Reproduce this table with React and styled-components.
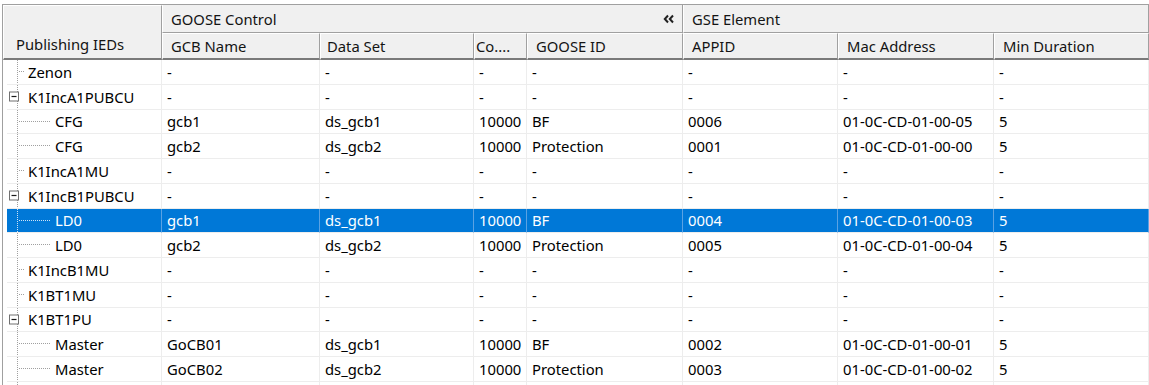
import React from "react";
import styled, { createGlobalStyle } from "styled-components";

const GlobalStyle = createGlobalStyle`
  html, body {
    margin: 0;
    padding: 0;
    background: #ffffff;
    overflow: hidden;
  }
  body {
    font-family: "Noto Sans", "Open Sans", sans-serif;
    font-size: 14.8px;
  }
`;

const COLS = "158px 154px 53px 156px 155px 156px 1fr";
const ROW_H = 24.75;

const Grid = styled.div`
  margin: 4px 0 0 2px;
  border-top: 1px solid #a0a0a0;
  border-left: 1px solid #a0a0a0;
  height: 381px;
  overflow: hidden;
`;

const Header = styled.div`
  display: grid;
  grid-template-columns: 159px ${COLS};
  grid-template-rows: 28px 27px;
  background: #f0f0f0;
  color: #141414;
`;

const HeadCell = styled.div`
  box-sizing: border-box;
  display: flex;
  align-items: ${(p) => (p.$bottom ? "flex-end" : "center")};
  justify-content: space-between;
  padding: 0 8px ${(p) => (p.$bottom ? "4px" : "0")} ${(p) => p.$pad ?? 8}px;
  border-left: 1px solid #ffffff;
  border-right: 1px solid #a0a0a0;
  border-top: ${(p) => (p.$lower ? "1px solid #ffffff" : "none")};
  border-bottom: ${(p) => (p.$lower ? "2px solid #7a7a7a" : "1px solid #a0a0a0")};
  grid-column: ${(p) => p.$col || "auto"};
  grid-row: ${(p) => p.$row || "auto"};
  white-space: nowrap;
  overflow: hidden;
`;

const Collapse = styled.svg`
  flex: none;
  margin-right: 0;
`;

const Row = styled.div`
  display: grid;
  grid-template-columns: 155px ${COLS};
  height: ${ROW_H}px;
  padding-left: 4px;
  color: ${(p) => (p.$selected ? "#ffffff" : "#000000")};
`;

const Cell = styled.div`
  box-sizing: border-box;
  display: flex;
  align-items: center;
  padding-left: 5px;
  border-right: 1px solid ${(p) => (p.$selected ? "#5aa2e3" : "#ededed")};
  border-bottom: 1px solid #ededed;
  background: ${(p) => (p.$selected ? "#0078d7" : "transparent")};
  white-space: nowrap;
  overflow: hidden;
`;

const TreeCell = styled(Cell)`
  padding-left: 0;
`;

const Guide = styled.svg`
  flex: none;
  height: 100%;
`;

const Label = styled.span`
  padding-left: 2px;
`;

const TreeGuide = ({ level, kind, selected }) => {
  const w = level === 0 ? 19 : 46;
  const h = ROW_H;
  const mid = Math.round(h / 2) - 0.5;
  const line = selected ? "#cfe3f6" : "#a0a0a0";
  return (
    <Guide width={w} viewBox={`0 0 ${w} ${h}`} preserveAspectRatio="xMinYMin slice">
      <line x1="10.5" y1="0" x2="10.5" y2={h} stroke={line} strokeDasharray="1 1" />
      {level === 1 && (
        <line x1="12" y1={mid} x2="44" y2={mid} stroke={line} strokeDasharray="1 1" />
      )}
      {level === 0 && kind === "leaf" && (
        <line x1="12" y1={mid} x2="18" y2={mid} stroke={line} strokeDasharray="1 1" />
      )}
      {kind === "open" && (
        <g>
          <rect x="2.5" y={mid - 4.5} width="9" height="9" fill="#ffffff" stroke="#707070" />
          <line x1="4.5" y1={mid} x2="9.5" y2={mid} stroke="#1a1a1a" strokeWidth="1.2" />
        </g>
      )}
    </Guide>
  );
};

const dash = ["-", "-", "-", "-", "-", "-", "-"];

const rows = [
  { level: 0, kind: "leaf", name: "Zenon", cells: dash },
  { level: 0, kind: "open", name: "K1IncA1PUBCU", cells: dash },
  { level: 1, name: "CFG", cells: ["gcb1", "ds_gcb1", "10000", "BF", "0006", "01-0C-CD-01-00-05", "5"] },
  { level: 1, name: "CFG", cells: ["gcb2", "ds_gcb2", "10000", "Protection", "0001", "01-0C-CD-01-00-00", "5"] },
  { level: 0, kind: "leaf", name: "K1IncA1MU", cells: dash },
  { level: 0, kind: "open", name: "K1IncB1PUBCU", cells: dash },
  { level: 1, name: "LD0", selected: true, cells: ["gcb1", "ds_gcb1", "10000", "BF", "0004", "01-0C-CD-01-00-03", "5"] },
  { level: 1, name: "LD0", cells: ["gcb2", "ds_gcb2", "10000", "Protection", "0005", "01-0C-CD-01-00-04", "5"] },
  { level: 0, kind: "leaf", name: "K1IncB1MU", cells: dash },
  { level: 0, kind: "leaf", name: "K1BT1MU", cells: dash },
  { level: 0, kind: "open", name: "K1BT1PU", cells: dash },
  { level: 1, name: "Master", cells: ["GoCB01", "ds_gcb1", "10000", "BF", "0002", "01-0C-CD-01-00-01", "5"] },
  { level: 1, name: "Master", cells: ["GoCB02", "ds_gcb2", "10000", "Protection", "0003", "01-0C-CD-01-00-02", "5"] },
  { level: 1, name: "", cells: ["", "", "", "", "", "", ""] },
];

export default function App() {
  return (
    <>
      <GlobalStyle />
      <Grid>
        <Header>
          <HeadCell $row="1 / 3" $lower $bottom $pad={12}>Publishing IEDs</HeadCell>
          <HeadCell $col="2 / 6">
            GOOSE Control
            <Collapse width="11" height="10" viewBox="0 0 11 10">
              <polyline points="5,1.5 1.8,5 5,8.5" fill="none" stroke="#222" strokeWidth="2" />
              <polyline points="10,1.5 6.8,5 10,8.5" fill="none" stroke="#222" strokeWidth="2" />
            </Collapse>
          </HeadCell>
          <HeadCell $col="6 / 9">GSE Element</HeadCell>
          <HeadCell $lower>GCB Name</HeadCell>
          <HeadCell $lower $pad={6}>Data Set</HeadCell>
          <HeadCell $lower $pad={1}>Co....</HeadCell>
          <HeadCell $lower>GOOSE ID</HeadCell>
          <HeadCell $lower>APPID</HeadCell>
          <HeadCell $lower>Mac Address</HeadCell>
          <HeadCell $lower>Min Duration</HeadCell>
        </Header>
        {rows.map((r, i) => (
          <Row key={i} $selected={r.selected}>
            <TreeCell $selected={r.selected}>
              <TreeGuide level={r.level} kind={r.kind} selected={r.selected} />
              <Label>{r.name}</Label>
            </TreeCell>
            {r.cells.map((c, j) => (
              <Cell key={j} $selected={r.selected}>{c}</Cell>
            ))}
          </Row>
        ))}
      </Grid>
    </>
  );
}
